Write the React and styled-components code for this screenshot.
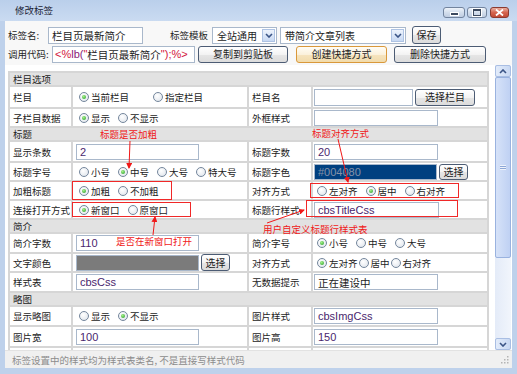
import styled, { createGlobalStyle, css } from "styled-components"

const GlobalStyle = createGlobalStyle`
  body {
    margin: 0;
    font-family: "Noto Sans CJK SC", "Liberation Sans", sans-serif;
    font-size: 9.5px;
    color: #1c1c1c;
  }
`

function RadioOpt({ on, children }) {
  return (
    <Option>
      <Radio $on={on} />
      {children}
    </Option>
  )
}

function Chevron({ up }) {
  return (
    <svg width="8" height="5" viewBox="0 0 8 5">
      <polyline points={up ? "1,4 4,1 7,4" : "1,1 4,4 7,1"} fill="none" stroke="#3a5486" strokeWidth="1.6" />
    </svg>
  )
}

export default function App() {
  return (
    <Window>
      <GlobalStyle />
      <TitleBar>
        <Title>修改标签</Title>
        <Controls>
          <CtrlButton $w={22}><MinGlyph /></CtrlButton>
          <CtrlButton $w={20}><MaxGlyph /></CtrlButton>
          <CtrlButton $w={19} $close>
            <svg width="9" height="7" viewBox="0 0 9 7">
              <path d="M1 0.5 L8 6.5 M8 0.5 L1 6.5" stroke="#fff" strokeWidth="1.8" />
            </svg>
          </CtrlButton>
        </Controls>
      </TitleBar>

      <Client>
        <FormArea>
          <FormRow>
            <FormLabel $w={40}>标签名:</FormLabel>
            <TextInput $w={95} $h={17} $cn readOnly defaultValue="栏目页最新简介" />
            <FormLabel $w={40} $ml={27}>标签模板</FormLabel>
            <Select $w={65} $ml={2}>全站通用<DropArrow><Chevron /></DropArrow></Select>
            <Select $w={126} $ml={3}>带简介文章列表<DropArrow><Chevron /></DropArrow></Select>
            <Button $w={29} $h={18} $ml={6}>保存</Button>
          </FormRow>
          <FormRow>
            <FormLabel $w={44}>调用代码:</FormLabel>
            <CodeField>
              <Sym>&lt;%</Sym><Fn>lb(</Fn><Sym>"</Sym><CodeCn>栏目页最新简介</CodeCn><Sym>");%&gt;</Sym>
            </CodeField>
            <Button $w={90} $ml={3}>复制到剪贴板</Button>
            <Button $w={91} $ml={8} $focus>创建快捷方式</Button>
            <Button $w={92} $ml={7}>删除快捷方式</Button>
          </FormRow>
        </FormArea>

        <Panel>
          <TableArea>
            <Grid>
              <HeadCell>栏目选项</HeadCell>
              <LabelCell>栏目</LabelCell>
              <Cell><Radios $gap={24}><RadioOpt on>当前栏目</RadioOpt><RadioOpt>指定栏目</RadioOpt></Radios></Cell>
              <LabelCell>栏目名</LabelCell>
              <Cell $right><TextInput $w={99} $h={17} /><Button $w={60} $ml={2}>选择栏目</Button></Cell>

              <LabelCell>子栏目数据</LabelCell>
              <Cell><Radios $gap={8}><RadioOpt on>显示</RadioOpt><RadioOpt>不显示</RadioOpt></Radios></Cell>
              <LabelCell>外框样式</LabelCell>
              <Cell $right><TextInput $w={124} /></Cell>

              <HeadCell>标题</HeadCell>
              <LabelCell>显示条数</LabelCell>
              <Cell><TextInput $w={123} readOnly defaultValue="2" /></Cell>
              <LabelCell>标题字数</LabelCell>
              <Cell $right><TextInput $w={124} readOnly defaultValue="20" /></Cell>

              <LabelCell>标题字号</LabelCell>
              <Cell><Radios $gap={8}><RadioOpt>小号</RadioOpt><RadioOpt on>中号</RadioOpt><RadioOpt>大号</RadioOpt><RadioOpt>特大号</RadioOpt></Radios></Cell>
              <LabelCell>标题字色</LabelCell>
              <Cell $right><TextInput $w={123} $h={16} $bg="#004080" $fg="#8592a8" readOnly defaultValue="#004080" /><Button $w={29} $h={16} $ml={2}>选择</Button></Cell>

              <LabelCell>加粗标题</LabelCell>
              <Cell><Radios $gap={8}><RadioOpt on>加粗</RadioOpt><RadioOpt>不加粗</RadioOpt></Radios></Cell>
              <LabelCell>对齐方式</LabelCell>
              <Cell $right><Radios $gap={8}><RadioOpt>左对齐</RadioOpt><RadioOpt on>居中</RadioOpt><RadioOpt>右对齐</RadioOpt></Radios></Cell>

              <LabelCell>连接打开方式</LabelCell>
              <Cell><Radios $gap={8}><RadioOpt on>新窗口</RadioOpt><RadioOpt>原窗口</RadioOpt></Radios></Cell>
              <LabelCell>标题行样式</LabelCell>
              <Cell $right><TextInput $w={125} readOnly defaultValue="cbsTitleCss" /></Cell>

              <HeadCell>简介</HeadCell>
              <LabelCell>简介字数</LabelCell>
              <Cell><TextInput $w={123} readOnly defaultValue="110" /></Cell>
              <LabelCell>简介字号</LabelCell>
              <Cell $right><Radios $gap={8}><RadioOpt on>小号</RadioOpt><RadioOpt>中号</RadioOpt><RadioOpt>大号</RadioOpt></Radios></Cell>

              <LabelCell>文字颜色</LabelCell>
              <Cell><TextInput $w={123} $h={16} $bg="#7b7b7b" /><Button $w={29} $h={17} $ml={2}>选择</Button></Cell>
              <LabelCell>对齐方式</LabelCell>
              <Cell $right><Radios $gap={1}><RadioOpt on>左对齐</RadioOpt><RadioOpt>居中</RadioOpt><RadioOpt>右对齐</RadioOpt></Radios></Cell>

              <LabelCell>样式表</LabelCell>
              <Cell><TextInput $w={123} readOnly defaultValue="cbsCss" /></Cell>
              <LabelCell>无数据提示</LabelCell>
              <Cell $right><TextInput $w={124} $cn readOnly defaultValue="正在建设中" /></Cell>

              <HeadCell>略图</HeadCell>
              <LabelCell>显示略图</LabelCell>
              <Cell><Radios $gap={8}><RadioOpt>显示</RadioOpt><RadioOpt on>不显示</RadioOpt></Radios></Cell>
              <LabelCell>图片样式</LabelCell>
              <Cell $right><TextInput $w={124} readOnly defaultValue="cbsImgCss" /></Cell>

              <LabelCell>图片宽</LabelCell>
              <Cell><TextInput $w={123} readOnly defaultValue="100" /></Cell>
              <LabelCell>图片高</LabelCell>
              <Cell $right><TextInput $w={124} readOnly defaultValue="150" /></Cell>

              <LabelCell />
              <Cell><TextInput $w={123} /></Cell>
              <LabelCell />
              <Cell $right><TextInput $w={124} /></Cell>
            </Grid>
          </TableArea>

          <ScrollBar>
            <ScrollBtn><Chevron up /></ScrollBtn>
            <Thumb><Grip /></Thumb>
            <Track />
            <ScrollBtn><Chevron /></ScrollBtn>
          </ScrollBar>
        </Panel>

        <StatusBar>
          标签设置中的样式均为样式表类名, 不是直接写样式代码
          <svg width="8" height="8" viewBox="0 0 8 8">
            <g fill="#b4b4b4">
              <rect x="6" y="0" width="1.5" height="1.5" />
              <rect x="3" y="3" width="1.5" height="1.5" />
              <rect x="6" y="3" width="1.5" height="1.5" />
              <rect x="0" y="6" width="1.5" height="1.5" />
              <rect x="3" y="6" width="1.5" height="1.5" />
              <rect x="6" y="6" width="1.5" height="1.5" />
            </g>
          </svg>
        </StatusBar>
      </Client>

      {/* red annotations drawn over the dialog */}
      <Mark $x={72} $y={181} $w={100} $h={19} />
      <Mark $x={72} $y={202} $w={119} $h={15} />
      <Mark $x={310} $y={183} $w={149} $h={15} />
      <Mark $x={306} $y={200} $w={152} $h={17} />
      <Note $x={100} $y={128}>标题是否加粗</Note>
      <Note $x={312} $y={127}>标题对齐方式</Note>
      <Note $x={116} $y={235}>是否在新窗口打开</Note>
      <Note $x={263} $y={223}>用户自定义标题行样式表</Note>
      <Arrows width="517" height="374" viewBox="0 0 517 374">
        <defs>
          <marker id="head" markerWidth="6" markerHeight="6" refX="5" refY="3" orient="auto" markerUnits="userSpaceOnUse">
            <path d="M0 0 L6 3 L0 6 Z" fill="#f01818" />
          </marker>
        </defs>
        <g stroke="#f01818" strokeWidth="1" fill="none" markerEnd="url(#head)">
          <line x1="130" y1="141" x2="129" y2="168" />
          <line x1="153" y1="235" x2="155" y2="217" />
          <line x1="338" y1="139" x2="348" y2="182" />
          <line x1="267" y1="223" x2="304" y2="210" />
        </g>
      </Arrows>
    </Window>
  )
}

const Window = styled.div`
  position: relative;
  width: 517px;
  height: 374px;
  display: flex;
  flex-direction: column;
  overflow: hidden;
  background: #bed1eb;
`

const TitleBar = styled.div`
  height: 21px;
  flex-shrink: 0;
  display: flex;
  justify-content: space-between;
  align-items: flex-start;
  background: linear-gradient(#bacfeb, #cadbf1);
`

const Title = styled.div`
  padding: 4px 0 0 15px;
  line-height: 13px;
  font-size: 9.5px;
  color: #1a2233;
`

const Controls = styled.div`
  display: flex;
  gap: 2px;
  padding: 7px 8px 0 0;
`

const CtrlButton = styled.div`
  width: ${p => p.$w}px;
  height: 11px;
  box-sizing: border-box;
  border: 1px solid #72849e;
  border-radius: 3px;
  display: flex;
  align-items: center;
  justify-content: center;
  background: linear-gradient(#eef3fa, #d3deec 50%, #bfcde2);
  ${p => p.$close && css`
    margin-left: 1px;
    border-color: #8a3b30;
    background: linear-gradient(#eab0a2, #d5654f 50%, #c24b36);
  `}
`

const MinGlyph = styled.span`
  width: 7px;
  height: 2px;
  margin-top: 3px;
  background: #3c4a60;
  border: 1px solid #fff;
`

const MaxGlyph = styled.span`
  width: 6px;
  height: 4px;
  border: 1px solid #3c4a60;
  border-top-width: 2px;
  outline: 1px solid #fff;
`

const Client = styled.div`
  flex: 1;
  min-height: 0;
  margin: 0 5px 6px;
  display: flex;
  flex-direction: column;
  background: #f8f8f8;
`

const FormArea = styled.div`
  height: 44px;
  box-sizing: border-box;
  padding: 5px 0 0 3px;
  display: flex;
  flex-direction: column;
  gap: 1px;
  flex-shrink: 0;
`

const FormRow = styled.div`
  height: 18px;
  display: flex;
  align-items: center;
`

const FormLabel = styled.span`
  width: ${p => p.$w}px;
  margin-left: ${p => p.$ml || 0}px;
  flex-shrink: 0;
  white-space: nowrap;
`

const TextInput = styled.input`
  box-sizing: border-box;
  width: ${p => p.$w}px;
  height: ${p => p.$h || 16}px;
  margin: 0;
  padding: 0 3px;
  flex-shrink: 0;
  border: 1px solid #a9b8cb;
  border-radius: 0;
  outline: none;
  background: ${p => p.$bg || "#fff"};
  color: ${p => p.$fg || (p.$cn ? "#1c1c1c" : "#4a1f6e")};
  font-family: "Liberation Sans", "Noto Sans CJK SC", sans-serif;
  font-size: ${p => (p.$cn ? "10.5px" : "11px")};
`

const CodeField = styled.div`
  box-sizing: border-box;
  width: 143px;
  height: 17px;
  padding-left: 2px;
  display: flex;
  align-items: center;
  flex-shrink: 0;
  overflow: hidden;
  white-space: nowrap;
  border: 1px solid #a9b8cb;
  background: #fff;
  font-family: "Liberation Sans", "Noto Sans CJK SC", sans-serif;
  font-size: 11px;
`

const Sym = styled.span`
  color: #d2143c;
`

const Fn = styled.span`
  color: #8a1a7a;
`

const CodeCn = styled.span`
  font-size: 10.5px;
  color: #1c1c1c;
`

const Select = styled.div`
  box-sizing: border-box;
  width: ${p => p.$w}px;
  height: 17px;
  margin-left: ${p => p.$ml || 0}px;
  padding: 0 1px 0 4px;
  display: flex;
  align-items: center;
  justify-content: space-between;
  flex-shrink: 0;
  border: 1px solid #a9b8cb;
  background: #fff;
  font-size: 10px;
  white-space: nowrap;
`

const DropArrow = styled.span`
  width: 13px;
  height: 13px;
  box-sizing: border-box;
  display: flex;
  align-items: center;
  justify-content: center;
  border: 1px solid #aec3e3;
  background: linear-gradient(#edf3fc, #c8d9f3);
`

const Button = styled.button`
  box-sizing: border-box;
  width: ${p => p.$w}px;
  height: ${p => p.$h || 17}px;
  margin: 0 0 0 ${p => p.$ml || 0}px;
  padding: 0;
  flex-shrink: 0;
  border: 1px solid #4c5c74;
  border-radius: 3px;
  font-family: "Noto Sans CJK SC", sans-serif;
  font-size: 10px;
  line-height: 1;
  color: #1c1c1c;
  background: linear-gradient(#ffffff, #f3f3f3 50%, #e6e6e6 51%, #dcdcdc);
  ${p => p.$focus && css`
    border-color: #d9983a;
    background: linear-gradient(#fffdf6, #fbf1dc 50%, #f6e4bf 51%, #f1dbab);
  `}
`

const Panel = styled.div`
  flex: 1;
  min-height: 0;
  display: flex;
  background: #fff;
`

const TableArea = styled.div`
  flex: 1;
  padding: 6px 0 0 3px;
  overflow: hidden;
`

const Grid = styled.div`
  display: grid;
  width: 481px;
  box-sizing: border-box;
  grid-template-columns: 61px 174px 62px 174px;
  grid-template-rows: 12px 20px 17px 12px 19px 17px 17px 17px 12px 18px 17px 18px 12px 18px 19px 19px;
  gap: 2px;
  padding: 2px;
  background: #d6d6d6;
`

const HeadCell = styled.div`
  grid-column: 1 / -1;
  display: flex;
  align-items: center;
  padding-left: 3px;
  background: #e2e2e2;
  color: #222;
`

const LabelCell = styled.div`
  display: flex;
  align-items: center;
  padding-left: 3px;
  white-space: nowrap;
  overflow: hidden;
  background: #fff;
`

const Cell = styled.div`
  display: flex;
  align-items: center;
  padding-left: ${p => (p.$right ? 1 : 3)}px;
  white-space: nowrap;
  overflow: hidden;
  background: #fff;
`

const Radios = styled.div`
  display: flex;
  align-items: center;
  gap: ${p => p.$gap}px;
  margin-left: 3px;
`

const Option = styled.label`
  display: flex;
  align-items: center;
  gap: 2px;
`

const Radio = styled.span`
  position: relative;
  width: 10px;
  height: 10px;
  box-sizing: border-box;
  flex-shrink: 0;
  border: 1px solid #74869c;
  border-radius: 50%;
  background: radial-gradient(circle at 40% 35%, #ffffff, #dce2ea);
  ${p => p.$on && css`
    &::after {
      content: "";
      position: absolute;
      left: 2px;
      top: 2px;
      width: 4px;
      height: 4px;
      border-radius: 50%;
      background: radial-gradient(circle at 40% 35%, #a6f08a, #1d9a22);
    }
  `}
`

const ScrollBar = styled.div`
  width: 16px;
  margin-right: 1px;
  display: flex;
  flex-direction: column;
  background: linear-gradient(90deg, #e4ebf8, #f1f5fc);
`

const ScrollBtn = styled.div`
  height: 12px;
  box-sizing: border-box;
  display: flex;
  align-items: center;
  justify-content: center;
  border: 1px solid #a9bee3;
  border-radius: 2px;
  background: linear-gradient(90deg, #e3ecfa, #c8d8f3);
`

const Thumb = styled.div`
  height: 181px;
  box-sizing: border-box;
  display: flex;
  align-items: center;
  justify-content: center;
  border: 1px solid #99b2df;
  border-radius: 2px;
  background: linear-gradient(90deg, #d6e2f8, #bfd1f3);
`

const Grip = styled.span`
  width: 6px;
  height: 5px;
  background: repeating-linear-gradient(#eef3fc 0 1px, #8ea8d6 1px 2px);
`

const Track = styled.div`
  flex: 1;
`

const StatusBar = styled.div`
  height: 17px;
  flex-shrink: 0;
  display: flex;
  align-items: center;
  justify-content: space-between;
  padding: 0 3px 0 7px;
  border-top: 1px solid #e2e2e2;
  background: #f0f0f0;
  color: #8c8c8c;
  font-size: 9.5px;
`

const Mark = styled.div`
  position: absolute;
  left: ${p => p.$x}px;
  top: ${p => p.$y}px;
  width: ${p => p.$w}px;
  height: ${p => p.$h}px;
  box-sizing: border-box;
  border: 1px solid #f02828;
  pointer-events: none;
`

const Note = styled.div`
  position: absolute;
  left: ${p => p.$x}px;
  top: ${p => p.$y}px;
  line-height: 12px;
  color: #f01818;
  font-size: 9.5px;
  white-space: nowrap;
`

const Arrows = styled.svg`
  position: absolute;
  left: 0;
  top: 0;
  pointer-events: none;
`
